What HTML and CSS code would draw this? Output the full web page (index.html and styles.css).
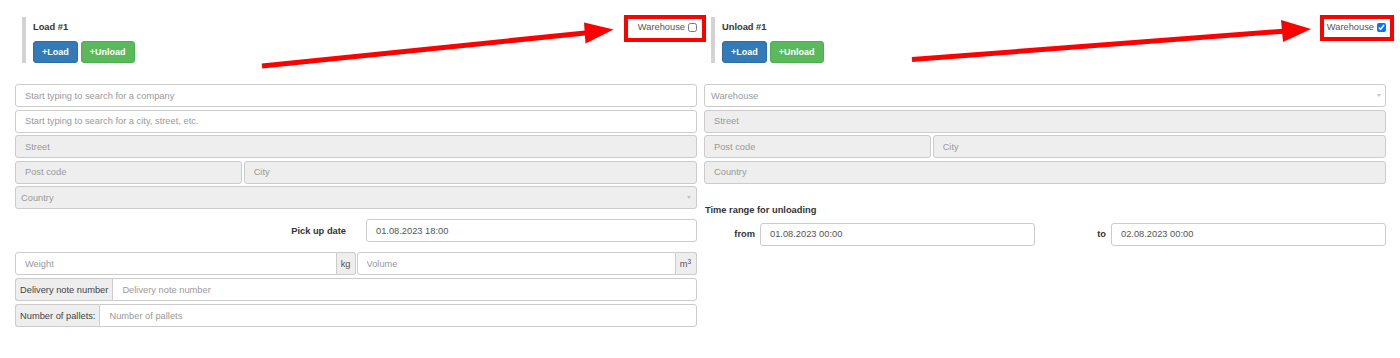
FILE: index.html
```html
<!DOCTYPE html>
<html lang="en">
<head>
    <meta charset="UTF-8">
    <meta name="viewport" content="width=device-width, initial-scale=1.0">
    <title>Route stops</title>
    <link rel="stylesheet" href="styles.css">
</head>
<body>
<div class="page">
    <!-- Load stop -->
    <div class="stop">
        <div class="stop-head">
            <div class="stop-title">
                <div class="stop-name">Load #1</div>
                <div class="btns">
                    <button class="btn btn-load">+Load</button>
                    <button class="btn btn-unload">+Unload</button>
                </div>
            </div>
            <label class="warehouse">Warehouse <input type="checkbox"></label>
        </div>

        <div class="fields">
            <input class="control" type="text" placeholder="Start typing to search for a company">
            <input class="control" type="text" placeholder="Start typing to search for a city, street, etc.">
            <input class="control locked" type="text" placeholder="Street" readonly>
            <div class="split">
                <input class="control locked" type="text" placeholder="Post code" readonly>
                <input class="control locked" type="text" placeholder="City" readonly>
            </div>
            <div class="control select locked narrow"><span>Country</span><span class="caret"></span></div>
        </div>

        <div class="date-row">
            <label class="field-label" for="pickup">Pick up date</label>
            <input class="control value" id="pickup" type="text" value="01.08.2023 18:00">
        </div>

        <div class="cargo">
            <div class="pair">
                <div class="group">
                    <input class="control" type="text" placeholder="Weight">
                    <span class="addon addon-end"><span>kg</span></span>
                </div>
                <div class="group">
                    <input class="control" type="text" placeholder="Volume">
                    <span class="addon addon-end m3"><span>m<sup>3</sup></span></span>
                </div>
            </div>
            <div class="group">
                <span class="addon addon-start">Delivery note number</span>
                <input class="control" type="text" placeholder="Delivery note number">
            </div>
            <div class="group">
                <span class="addon addon-start">Number of pallets:</span>
                <input class="control" type="text" placeholder="Number of pallets">
            </div>
        </div>
    </div>

    <!-- Unload stop -->
    <div class="stop">
        <div class="stop-head">
            <div class="stop-title">
                <div class="stop-name">Unload #1</div>
                <div class="btns">
                    <button class="btn btn-load">+Load</button>
                    <button class="btn btn-unload">+Unload</button>
                </div>
            </div>
            <label class="warehouse">Warehouse <input type="checkbox" checked></label>
        </div>

        <div class="fields">
            <div class="control select slim"><span>Warehouse</span><span class="caret"></span></div>
            <input class="control locked" type="text" placeholder="Street" readonly>
            <div class="split">
                <input class="control locked" type="text" placeholder="Post code" readonly>
                <input class="control locked" type="text" placeholder="City" readonly>
            </div>
            <input class="control locked" type="text" placeholder="Country" readonly>
        </div>

        <div class="time-title">Time range for unloading</div>
        <div class="time-row">
            <label class="field-label" for="from">from</label>
            <input class="control value" id="from" type="text" value="01.08.2023 00:00">
            <label class="field-label" for="to">to</label>
            <input class="control value" id="to" type="text" value="02.08.2023 00:00">
        </div>
    </div>

    <!-- red annotations drawn over the form -->
    <svg class="marks" width="1400" height="358" viewBox="0 0 1400 358">
        <line x1="262" y1="66" x2="590" y2="32.5" stroke="#ff0000" stroke-width="5"/>
        <polygon points="584,22.5 613.5,29.5 585.5,43.5" fill="#ff0000"/>
        <rect x="626" y="17" width="78" height="23" fill="none" stroke="#ff0000" stroke-width="4"/>

        <line x1="912" y1="59.5" x2="1286" y2="31" stroke="#ff0000" stroke-width="5"/>
        <polygon points="1281,20 1311,29 1283,42" fill="#ff0000"/>
        <rect x="1322" y="17" width="70" height="22" fill="none" stroke="#ff0000" stroke-width="4"/>
    </svg>
</div>
</body>
</html>
```

FILE: styles.css
```css
* {
    box-sizing: border-box;
}

body {
    margin: 0;
    font-family: "Liberation Sans", Arial, sans-serif;
    font-size: 9.3px;
    color: #333;
    background-color: #ffffff;
}

.page {
    position: relative;
    display: grid;
    grid-template-columns: 1fr 1fr;
    column-gap: 7px;
    padding: 17px 14px 0 15px;
    height: 358px;
}

.stop-head {
    display: flex;
    justify-content: space-between;
    align-items: flex-start;
    height: 46px;
}

.stop-title {
    margin-left: 7px;
    border-left: 4px solid #d3d3d3;
    padding-left: 7px;
    height: 46px;
    display: flex;
    flex-direction: column;
    justify-content: space-between;
}

.stop-name {
    font-weight: bold;
    line-height: 12px;
    margin-top: 4px;
}

.btns {
    display: flex;
    gap: 3px;
}

.btn {
    height: 22px;
    padding: 0 8px;
    border: 1px solid;
    border-radius: 3px;
    color: #ffffff;
    font-family: "Liberation Sans", Arial, sans-serif;
    font-size: 9px;
    font-weight: bold;
}

.btn-load {
    background-color: #337ab7;
    border-color: #2e6da4;
}

.btn-unload {
    background-color: #5cb85c;
    border-color: #4cae4c;
}

.warehouse {
    display: flex;
    align-items: center;
    margin-top: 4px;
    line-height: 12px;
    color: #555;
}

.warehouse input {
    width: 9px;
    height: 9px;
    margin: 0 0 0 3px;
}

.fields {
    margin-top: 21px;
    display: flex;
    flex-direction: column;
    gap: 2.5px;
}

.control {
    width: 100%;
    height: 23px;
    padding: 0 9px;
    border: 1px solid #ccc;
    border-radius: 3px;
    background-color: #ffffff;
    font-family: inherit;
    font-size: 9.3px;
    color: #555;
    outline: none;
}

.control::placeholder {
    color: #999;
}

.control.locked {
    background-color: #eee;
}

.select {
    display: flex;
    align-items: center;
    justify-content: space-between;
    color: #999;
}

.select.narrow {
    padding: 0 5px;
}

.select.slim {
    padding: 0 4px 0 6px;
}

.caret {
    width: 0;
    height: 0;
    border-left: 2.5px solid transparent;
    border-right: 2.5px solid transparent;
    border-top: 3px solid #c4c4c4;
}

.split {
    display: grid;
    grid-template-columns: 1fr 2fr;
    gap: 2px;
}

.field-label {
    font-weight: bold;
    text-align: right;
    color: #333;
}

.date-row {
    margin-top: 10px;
    display: grid;
    grid-template-columns: 1fr 1fr;
    column-gap: 20px;
    align-items: center;
}

.cargo {
    margin-top: 10px;
    display: flex;
    flex-direction: column;
    gap: 3px;
}

.pair {
    display: grid;
    grid-template-columns: 1fr 1fr;
    gap: 1px;
}

.group {
    display: flex;
    height: 23px;
}

.group .control {
    flex: 1;
    min-width: 0;
}

.addon {
    display: flex;
    align-items: center;
    padding: 0 4px;
    border: 1px solid #ccc;
    background-color: #eee;
    color: #555;
    white-space: nowrap;
}

.addon-end {
    border-left: none;
    border-radius: 0 3px 3px 0;
}

.addon-end.m3 {
    padding: 0 5px 0 4px;
}

.addon sup {
    font-size: 6.5px;
    line-height: 0;
    vertical-align: 3px;
}

.group .control:first-child {
    border-radius: 3px 0 0 3px;
}

.addon-start {
    border-right: none;
    border-radius: 3px 0 0 3px;
    color: #444;
}

.addon-start + .control {
    border-radius: 0 3px 3px 0;
}

.time-title {
    margin-top: 20px;
    line-height: 12px;
    font-weight: bold;
    padding-left: 1px;
}

.time-row {
    margin-top: 7px;
    display: grid;
    grid-template-columns: 56px 1fr 76px 1fr;
    align-items: center;
}

.time-row .field-label {
    padding-right: 5px;
}

.marks {
    position: absolute;
    top: 0;
    left: 0;
    pointer-events: none;
}
```
